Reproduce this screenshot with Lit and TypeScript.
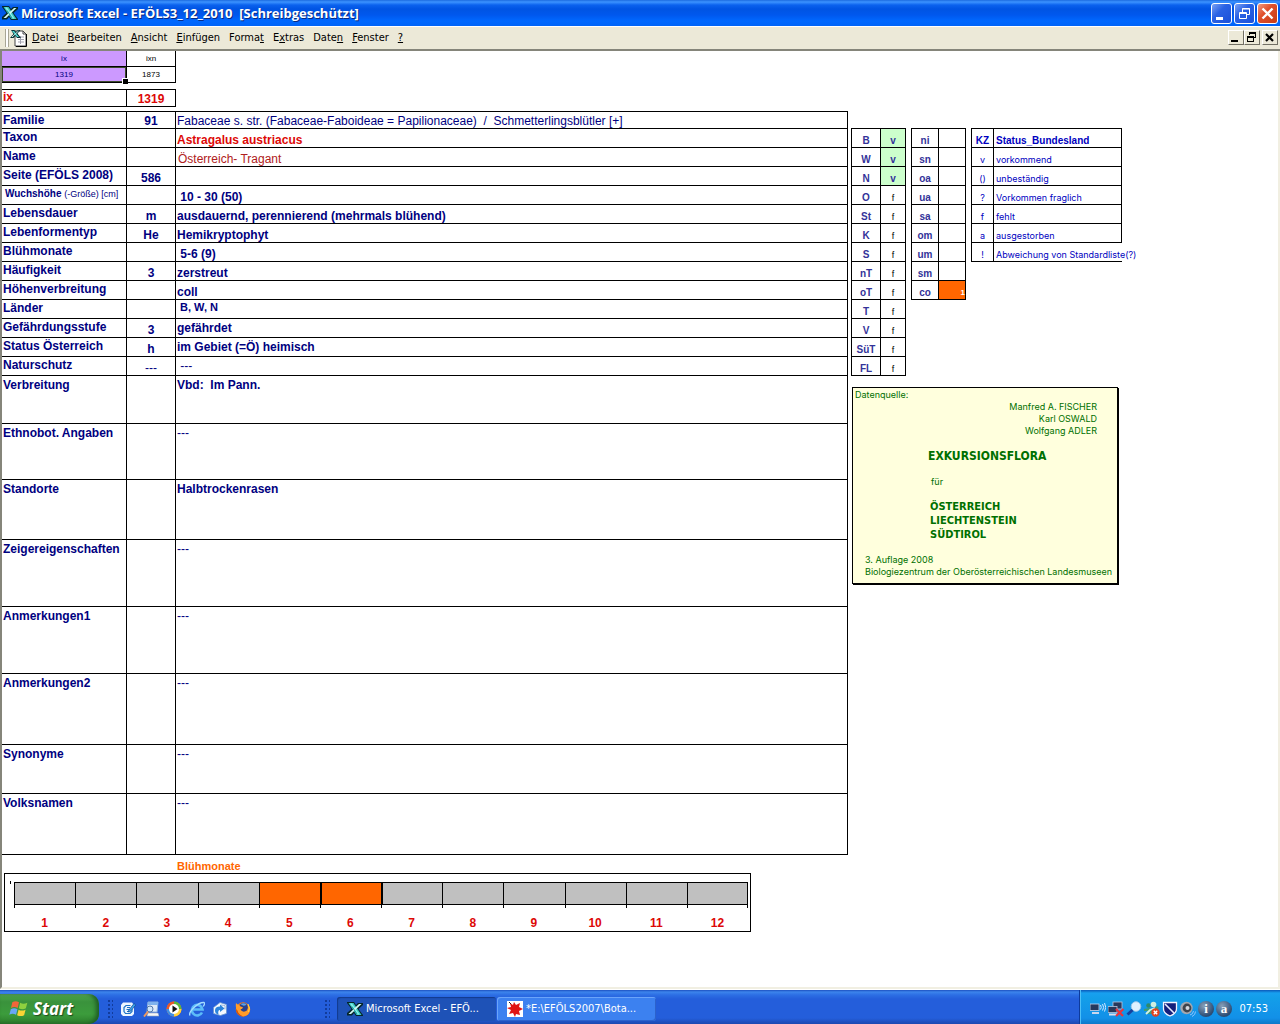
import { LitElement, html, css, svg, nothing } from "lit";
import { customElement } from "lit/decorators.js";
import { classMap } from "lit/directives/class-map.js";

type Align = "top" | "mid" | "low";

interface SheetRow {
  label: string;
  hint?: string;
  code?: string;
  value?: string;
  height: number;
  align?: Align;
  tone?: string;
}

const ROWS: SheetRow[] = [
  { label: "Familie", code: "91", value: "Fabaceae s. str. (Fabaceae-Faboideae = Papilionaceae)  /  Schmetterlingsblütler [+]", height: 17, tone: "plain" },
  { label: "Taxon", value: "Astragalus austriacus", height: 19, tone: "taxon" },
  { label: "Name", value: "Österreich- Tragant", height: 19, tone: "name" },
  { label: "Seite (EFÖLS 2008)", code: "586", height: 19 },
  { label: "Wuchshöhe", hint: "(-Größe) [cm]", value: "\u00a010 - 30 (50)", height: 19 },
  { label: "Lebensdauer", code: "m", value: "ausdauernd, perennierend (mehrmals blühend)", height: 19 },
  { label: "Lebenformentyp", code: "He", value: "Hemikryptophyt", height: 19 },
  { label: "Blühmonate", value: "\u00a05-6 (9)", height: 19 },
  { label: "Häufigkeit", code: "3", value: "zerstreut", height: 19 },
  { label: "Höhenverbreitung", value: "coll", height: 19 },
  { label: "Länder", value: "\u00a0B, W, N", height: 19, align: "top", tone: "small" },
  { label: "Gefährdungsstufe", code: "3", value: "gefährdet", height: 19, align: "mid" },
  { label: "Status Österreich", code: "h", value: "im Gebiet (=Ö) heimisch", height: 19, align: "mid" },
  { label: "Naturschutz", code: "---", value: "\u00a0---", height: 19, align: "mid", tone: "plain" },
  { label: "Verbreitung", value: "Vbd:  Im Pann.", height: 48 },
  { label: "Ethnobot. Angaben", value: "---", height: 56, tone: "plain" },
  { label: "Standorte", value: "Halbtrockenrasen", height: 60 },
  { label: "Zeigereigenschaften", value: "---", height: 67, tone: "plain" },
  { label: "Anmerkungen1", value: "---", height: 67, tone: "plain" },
  { label: "Anmerkungen2", value: "---", height: 71, tone: "plain" },
  { label: "Synonyme", value: "---", height: 49, tone: "plain" },
  { label: "Volksnamen", value: "---", height: 61, tone: "plain" },
];

const LANDS: [string, string][] = [
  ["B", "v"], ["W", "v"], ["N", "v"], ["O", "f"], ["St", "f"], ["K", "f"], ["S", "f"],
  ["nT", "f"], ["oT", "f"], ["T", "f"], ["V", "f"], ["SüT", "f"], ["FL", "f"],
];
const LEVELS = ["ni", "sn", "oa", "ua", "sa", "om", "um", "sm", "co"];
const KEYS: [string, string][] = [
  ["v", "vorkommend"],
  ["()", "unbeständig"],
  ["?", "Vorkommen fraglich"],
  ["f", "fehlt"],
  ["a", "ausgestorben"],
  ["!", "Abweichung von Standardliste(?)"],
];
const MENU: [string, string, string][] = [
  ["", "D", "atei"], ["", "B", "earbeiten"], ["", "A", "nsicht"], ["", "E", "infügen"],
  ["Forma", "t", ""], ["E", "x", "tras"], ["Date", "n", ""], ["", "F", "enster"], ["", "?", ""],
];

const excelIcon = html`<svg class="ico" viewBox="0 0 16 16" aria-hidden="true">
  <path d="M0 1h7l2 3 2-2h5v2l-4.500 4L16 14v1H9l-2-3-2 2.500H0V12l4.500-4L0 2z" fill="#06262a"/>
  <path d="M1.500 2h5L14.500 14h-5z" fill="#38c8c4"/>
  <path d="M3 2.500h2L12.500 13.500h-2z" fill="#8ceee6"/>
  <path d="M12 3h2.500L4 13H1.500z" fill="#d4f8f4"/>
  <path d="M5 5.500l5 7.500" stroke="#1c9c9c" stroke-width="1"/>
</svg>`;

const docIcon = html`<svg class="doc" viewBox="0 0 18 18" aria-hidden="true">
  <path d="M5 2h8l3 3v12H5z" fill="#fff" stroke="#444"/>
  <path d="M13 2v3h3" fill="none" stroke="#444"/>
  <path d="M16.500 5v12.500H6" fill="none" stroke="#000"/>
  <path d="M8 8h6M8 10.500h6M8 13h6M10.500 7v8" stroke="#a4a4b0"/>
  <path d="M1 1h3.500l1.500 2 2-2h2.500L7.500 4.500 11 9H7L5.500 7 3.500 9H0l3.500-4z" fill="#063034"/>
  <path d="M2 2h2l5 6H7z" fill="#4fd8d0"/>
  <path d="M8.500 2L2 8" stroke="#c8f4f0"/>
</svg>`;

const flagIcon = html`<svg class="flag" viewBox="0 0 18 18" aria-hidden="true">
  <path d="M3 3q3-2 6 0l-1.200 5q-3-1.800-6 0z" fill="#f0663a"/>
  <path d="M10 3.400q3 1.800 6.500 0l-1.300 5q-3 1.600-6.300 0z" fill="#8fd13f"/>
  <path d="M1.600 9.200q3-1.800 6 0l-1.300 5q-3-1.800-6 0z" fill="#6aa7f5"/>
  <path d="M8.600 9.600q3 1.600 6.300 0l-1.300 5q-3 1.600-6.300 0z" fill="#fbd435"/>
</svg>`;

const ico = (body: unknown) => html`<svg class="ico" viewBox="0 0 16 16" aria-hidden="true">${body}</svg>`;

const QUICK: [string, unknown][] = [
  ["Desktop anzeigen", svg`<path d="M3 1.500h9L14 4v9l-2 2H3l-2-2V4z" fill="#eef6ff"/><path d="M10.500 4.500H6L4 6.500v4l1.500 2H10l2-2V8M6.500 8.500H10M7 6.500h3M7 10.500h2" fill="none" stroke="#1c72c8" stroke-width="1.200"/><path d="M8.500 9.500l5.500-7 1.800 1.500-5.500 6.500-2 .5z" fill="#3aa0e8" stroke="#124a92" stroke-width=".7"/>`],
  ["Suche", svg`<path d="M5 1h10l-1 10H4z" fill="#dfeaf8" stroke="#8cb0e0"/><path d="M5 1h10v3H5z" fill="#7fb2ee"/><path d="M5 12h10l1 3H4z" fill="#f6f6f6" stroke="#9aa8c0" stroke-width=".6"/><circle cx="7" cy="8" r="3" fill="#cfe6fb" stroke="#5577aa"/><path d="M5 10.500L1 15.500" stroke="#f09a5c" stroke-width="2"/>`],
  ["Media Player", svg`<circle cx="8" cy="8" r="7.500" fill="#f5741f"/><path d="M8 .5A7.500 7.500 0 0 1 15.500 8H8z" fill="#58b83c"/><path d="M15.500 8A7.500 7.500 0 0 1 8 15.500V8z" fill="#ffd23c"/><path d="M.5 8A7.500 7.500 0 0 1 8 .5V8z" fill="#e8582a"/><path d="M.5 8A7.500 7.500 0 0 0 8 15.500V8z" fill="#3f8fe4"/><circle cx="8" cy="8" r="5" fill="#fff"/><path d="M6.500 4.500L11.500 8l-5 3.500z" fill="#111"/>`],
  ["Internet Explorer", svg`<path d="M13 11.500A5.300 5.300 0 1 1 13.500 8.500H4" fill="none" stroke="#5cbcf8" stroke-width="2.600"/><path d="M1 14.500C-1 11 9 1 15 1.500c1.500.8-.2 3-.8 4" fill="none" stroke="#a4dcff" stroke-width="1.400"/>`],
  ["Outlook Express", svg`<path d="M1.500 6.500L8 1.500l6.500 2v9l-6 2-7-2z" fill="#f4f8ff" stroke="#6a94cc" stroke-width=".8"/><path d="M9 4l4 .5v4" fill="none" stroke="#9ab8dc"/><path d="M3 9.500q0-4 5-4V3.500l4.500 4L8 11V9q-2.500 0-1.500 4.500Q3 13 3 9.500z" fill="#2c84dc"/>`],
  ["Firefox", svg`<circle cx="8" cy="8.500" r="7.200" fill="#f07818"/><circle cx="8.500" cy="6.500" r="4.500" fill="#27408c"/><path d="M5.500 3.200q3-2 6 0-1 1.500-3 1.500z" fill="#5aa0e8"/><path d="M1 2q1 1.800 3 1.800 1 2.200 4 2.400-.5 1.800-2.500 2 1 3 4.500 2.300 4-1 2.500-7.500Q17 9 13 13.500 8 17 3.500 13 0 9 1 2z" fill="#ff9c2a"/><path d="M1 8q0 6.500 7 7.500-5-2.500-5.500-6z" fill="#d4500c"/><path d="M13 3q2.500 4 .5 8" stroke="#ffd84a" fill="none"/>`],
];

const TRAY: [string, unknown][] = [
  ["Drahtlosnetzwerk", svg`<rect x="0" y="3" width="9" height="6.500" fill="#26385c" stroke="#c9d6ee" stroke-width=".8"/><path d="M2 12h7" stroke="#c9d6ee" stroke-width="2"/><path d="M10.500 4q1.500 2.500 0 4.500M12.500 3q2.300 3.500 0 6.500M14.500 2q2.500 4.500 0 8.500" fill="none" stroke="#d4e6ff"/>`],
  ["LAN getrennt", svg`<rect x="5" y="1" width="9" height="7" fill="#26385c" stroke="#b9c6de" stroke-width=".8"/><rect x="0" y="5.500" width="9" height="6" fill="#26385c" stroke="#b9c6de" stroke-width=".8"/><path d="M1 13.500h8" stroke="#d9dfee" stroke-width="2"/><path d="M8 8l7 7M15.500 8l-7.500 7" stroke="#e8343c" stroke-width="2.200"/>`],
  ["Lupe", svg`<circle cx="10" cy="5.500" r="4.800" fill="#dff1ff" stroke="#9cc8ea"/><path d="M6.500 9L1.500 13.500" stroke="#173f9c" stroke-width="3"/>`],
  ["Messenger", svg`<circle cx="4.500" cy="4.500" r="2.300" fill="#2f8a6a"/><circle cx="9.500" cy="3.500" r="2.800" fill="#cfeee0"/><path d="M0 8l5-1 3 2 5-4 2 2-4 3v3H3v-3H0z" fill="#3c9c74"/><path d="M2 13l4-4 5-2" fill="none" stroke="#d4f2e4" stroke-width="1.800"/><circle cx="11.500" cy="11.500" r="4.200" fill="#e0421f"/><path d="M9.800 9.800l3.400 3.400M13.200 9.800l-3.400 3.400" stroke="#fff" stroke-width="1.400"/>`],
  ["Virenschutz", svg`<path d="M1.500 1.500h13V8q0 4.500-6.500 7-6.500-2.500-6.500-7z" fill="#14207c" stroke="#f2f4ff" stroke-width="1.300"/><path d="M3 3l9 9" stroke="#e8ecff" stroke-width="1.600"/>`],
  ["Lautstärke", svg`<circle cx="6.500" cy="7" r="6.200" fill="#a4a8b0"/><circle cx="7" cy="7" r="4.400" fill="#3f444c"/><circle cx="7.500" cy="7" r="2" fill="#d4d8de"/><path d="M10 14q3-.5 3.500-4M12 15.500q3.500-1.500 3.500-5" fill="none" stroke="#8cc4ff"/>`],
];

@customElement("app-root")
export class AppRoot extends LitElement {
  static styles = css`
    :host { display: block; font-family: "Liberation Sans", Arial, sans-serif; font-size: 12px; color: #000080; }
    * { box-sizing: border-box; }
    button { font: inherit; color: inherit; margin: 0; padding: 0; border: 0; background: none; }
    .window { display: flex; flex-direction: column; min-height: 100vh; background: #fff; }
    .ico { width: 16px; height: 16px; flex: none; display: block; }

    .title { display: flex; align-items: center; height: 27px; padding: 0 2px; gap: 3px; border-bottom: 1px solid #fff;
      background: linear-gradient(#1c6be0 0, #3c93ff 2px, #0b62ee 5px, #0054e3 9px, #0058ee 15px, #0068ff 21px, #0064f8 26px); }
    .title h1 { flex: 1; margin: 0; font: bold 13px/20px "Open Sans", sans-serif; color: #fff; white-space: pre; text-shadow: 1px 1px #0a2a80; }
    .controls { display: flex; gap: 2px; }
    .ctl { width: 21px; height: 21px; border: 1px solid #fff; border-radius: 3px; background: linear-gradient(135deg, #7ba2f4, #2a62e4 40%, #1b50d8); }
    .ctl svg { display: block; width: 19px; height: 19px; }
    .ctl.close { background: linear-gradient(135deg, #f09a80, #e0502c 40%, #c83c14); }

    .menubar { display: flex; align-items: center; height: 24px; padding: 0 2px 1px 5px; background: #ece9d8;
      border-bottom: 2px solid #85857a; font: 11px/14px "DejaVu Sans Condensed", "DejaVu Sans", sans-serif; color: #000; }
    .grip { width: 4px; height: 18px; border-left: 1px solid #a8a696; border-right: 1px solid #a8a696; background: #fff; }
    .doc { width: 18px; height: 18px; margin: 0 4px 0 1px; }
    .menubar nav { display: flex; flex: 1; gap: 9px; }
    .menubar nav button { white-space: nowrap; }
    .mini { display: flex; }
    .mini button { width: 16px; height: 15px; border: 1px solid; border-color: #fff #716f64 #716f64 #fff; background: #ece9d8; }
    .mini button:last-child { margin-left: 2px; }
    .mini svg { display: block; width: 14px; height: 13px; }

    .sheet { flex: 1; border: solid; border-width: 0 2px 2px 2px; border-color: #fff #f1efe2 #f1efe2 #85857a; padding-bottom: 24px; }
    table { border-collapse: separate; border-spacing: 0; table-layout: fixed; }
    th, td { padding: 0; font-weight: bold; border: solid #000; border-width: 0 1px 1px 0; line-height: 14px; }

    .head { width: 174px; font-size: 8px; text-align: center; }
    .head th, .head td { height: 16px; font-weight: normal; color: #000; }
    .head .wide { width: 125px; }
    .head .key { background: #cc99ff; color: #000080; }
    .head .active { position: relative; }
    .cursor { position: absolute; inset: 0; border: 1px solid #3c4a2c; }
    .cursor::after { content: ""; position: absolute; right: -3px; bottom: -3px; width: 5px; height: 5px; background: #000; border: solid #fff; border-width: 1px 0 0 1px; }
    .index { width: 174px; margin: 6px 0 4px; border-top: 1px solid #000; color: #dd0806; }
    .index th, .index td { height: 17px; vertical-align: top; text-align: center; }
    .index th { width: 125px; text-align: left; padding-left: 1px; }
    .index td { vertical-align: bottom; }

    .content { display: flex; align-items: flex-start; gap: 3px; }
    .main { flex: 0 1 846px; }
    .record { width: 100%; border-top: 1px solid #000; }
    .c1 { width: 125px; } .c2 { width: 49px; }
    .record th { text-align: left; vertical-align: top; padding: 1px 0 0 1px; white-space: nowrap; }
    .record td { vertical-align: bottom; }
    .record .code { text-align: center; }
    .record .value { padding-left: 1px; white-space: pre-wrap; }
    .record .top { vertical-align: top; }
    .record .mid { vertical-align: middle; }
    .record .tall th, .record .tall td { vertical-align: top; padding-top: 2px; }
    .plain { font-weight: normal; }
    .record .name, .record .family { padding-left: 2px; }
    .taxon { color: #dd0806; }
    .name { color: #b02020; font-weight: normal; }
    .small { font-size: 11px; }
    .record th.hinted { font-size: 10px; padding-left: 3px; }
    .hint { font-size: 9px; font-weight: normal; }

    .side { flex: 1; margin-top: 17px; }
    .lists { display: flex; align-items: flex-start; gap: 5px; }
    .lists table { border: solid #000; border-width: 1px 0 0 1px; font-size: 10px; text-align: center; }
    .lists th, .lists td { height: 19px; vertical-align: bottom; line-height: 12px; }
    .lists th { color: #333399; }
    .lands { width: 55px; } .lands th { width: 29px; }
    .levels { width: 55px; } .levels th { width: 27px; }
    .lands td { color: #000; font-weight: normal; font-size: 9px; }
    .lands .yes { background: #ccffcc; color: #333399; font-weight: bold; font-size: 10px; }
    .levels .hit { background: #ff6600; color: #fff; font-size: 8px; text-align: right; }
    .keys { width: 151px; }
    .lists .keys th, .lists .keys td { color: #0000c0; white-space: nowrap; }
    .lists .keys td { font: 9px/12px Inter, "Liberation Sans", sans-serif; }
    .keys .k { width: 22px; }
    .keys .t { text-align: left; padding-left: 2px; }
    .keys tr:last-child .t { border-right: 0; }

    .source { display: flex; flex-direction: column; width: 266px; margin: 11px 0 0 1px; padding: 1px 12px 5px 2px; border: 1px solid #000;
      background: #ffffdd; box-shadow: 1px 1px #000; color: #007000; font: 9px/12px Inter, "Liberation Sans", sans-serif; }
    .source p { margin: 0; }
    .source .authors { text-align: right; padding-right: 8px; }
    .source .work { margin: 12px 0 0 73px; font: bold 12px/14px "DejaVu Sans Condensed", "DejaVu Sans", sans-serif; }
    .source .for { margin: 13px 0 0 76px; }
    .source .places { margin: 12px 0 0 75px; font: bold 11px/14px "DejaVu Sans Condensed", "DejaVu Sans", sans-serif; }
    .source .edition { margin: 12px 0 0 10px; white-space: nowrap; }

    .caption { margin: 0 0 0 175px; padding-top: 4px; font-size: 11px; line-height: 14px; color: #ff6600; }
    .chart { position: relative; display: grid; grid-template-columns: repeat(12, 1fr); width: calc(100% - 99px); margin: 0 0 0 2px; padding: 8px 2px 0 9px;
      list-style: none; border: 1px solid #000; }
    .chart::before { content: ""; position: absolute; left: 5px; top: 7px; width: 1px; height: 3px; background: #000; }
    .month { text-align: center; font-weight: bold; color: #dd0806; line-height: 16px; }
    .bar { height: 23px; border: solid #000; border-width: 1px 0 1px 1px; background: #c0c0c0; }
    .month:last-child .bar { border-right-width: 1px; }
    .bar.on { background: #ff6600; }
    .bar.edge { border-left-width: 2px; }
    .tick { height: 3px; margin-bottom: 7px; border-left: 1px solid #000; }
    .month:last-child .tick { border-right: 1px solid #000; }

    .taskbar { display: flex; align-items: stretch; height: 34px; margin-top: 1px; color: #fff;
      font: 11px/14px "DejaVu Sans Condensed", "DejaVu Sans", sans-serif;
      background: linear-gradient(#1c50c0 0, #3c84ec 2px, #2c6ee4 5px, #245edb 9px, #245edb 28px, #1c48b0 34px); }
    .start { display: flex; align-items: center; gap: 4px; width: 99px; margin-top: 4px; padding-left: 9px; border-radius: 0 10px 10px 0;
      font: italic bold 17px/24px "Open Sans", sans-serif; text-shadow: 1px 1px 1px #1c4a1c;
      background: linear-gradient(#6cb46c 0, #47a047 3px, #3a923c 8px, #3c9c3c 20px, #2c7c2c 30px); box-shadow: inset -3px 0 4px #1f5c24; }
    .flag { width: 20px; height: 20px; }
    .dots { width: 5px; margin: 10px 7px 6px 9px; background: radial-gradient(circle at 1px 1px, #123c9c 1px, transparent 1px) 0 0 / 4px 4px; }
    .quick { display: flex; align-items: center; gap: 7px; padding-top: 4px; width: 196px; }
    .tasks { display: flex; flex: 1; gap: 1px; padding: 7px 0 3px 0; }
    .task { display: flex; align-items: center; gap: 3px; width: 159px; padding-left: 10px; border-radius: 3px; white-space: nowrap;
      background: #3c81f0; box-shadow: inset 1px 1px #6aa4fa, inset -1px -1px #2c62cc; }
    .task.on { background: #1e52b7; box-shadow: inset 1px 1px 1px #123a8c; }
    .tray { display: flex; align-items: center; gap: 2px; width: 201px; padding: 4px 12px 0 10px; border-left: 1px solid #0d3a9c;
      background: linear-gradient(#0c59b9 0, #18a0f0 3px, #139ee9 8px, #1290e8 28px, #0f78c8 34px); box-shadow: inset 1px 0 #4cc0f8; }
    .tray time { flex: 1; text-align: right; white-space: nowrap; }
    .orb { width: 16px; height: 16px; border-radius: 8px; background: radial-gradient(circle at 6px 5px, #88a0b8, #2c4c74 70%);
      color: #fff; font: bold 13px/15px "Liberation Serif", serif; text-align: center; }
  `;

  private titleBar() {
    return html`<header class="title">
      ${excelIcon}
      <h1>Microsoft Excel - EFÖLS3_12_2010  [Schreibgeschützt]</h1>
      <div class="controls">
        <button class="ctl" aria-label="Minimieren"><svg viewBox="0 0 19 19"><path d="M4 13h7v3H4z" fill="#fff"/></svg></button>
        <button class="ctl" aria-label="Wiederherstellen"><svg viewBox="0 0 19 19"><path d="M7.500 8V4.500h7v6H12M7 5h8" fill="none" stroke="#fff"/><path d="M4.500 8.500h7v6h-7zM4 9.500h8" fill="none" stroke="#fff"/></svg></button>
        <button class="ctl close" aria-label="Schließen"><svg viewBox="0 0 19 19"><path d="M4.500 4.500l10 10M14.500 4.500l-10 10" stroke="#fff" stroke-width="2.400"/></svg></button>
      </div>
    </header>`;
  }

  private menuBar() {
    return html`<div class="menubar">
      <span class="grip"></span>${docIcon}
      <nav aria-label="Menü">${MENU.map(([a, k, b]) => html`<button>${a}<u>${k}</u>${b}</button>`)}</nav>
      <div class="mini">
        <button aria-label="Mappe minimieren"><svg viewBox="0 0 14 13"><path d="M2 9h7v2H2z"/></svg></button>
        <button aria-label="Mappe wiederherstellen"><svg viewBox="0 0 14 13"><path d="M4 1h7v6H9V6h1V3H5v1H4zM2 5h7v6H2zM3 7v3h5V7z" fill-rule="evenodd"/></svg></button>
        <button aria-label="Mappe schließen"><svg viewBox="0 0 14 13"><path d="M3 3l7 7M10 3l-7 7" stroke="#000" stroke-width="2.200"/></svg></button>
      </div>
    </div>`;
  }

  private record() {
    return html`<table class="record">
      <colgroup><col class="c1"><col class="c2"><col></colgroup>
      ${ROWS.map((r) => html`<tr class=${classMap({ tall: r.height > 19 })} style="height:${r.height}px">
        <th scope="row" class=${classMap({ hinted: !!r.hint })}>${r.label}${r.hint ? html` <span class="hint">${r.hint}</span>` : nothing}</th>
        <td class=${classMap({ code: true, plain: r.code === "---" })}>${r.code ?? ""}</td>
        <td class="value ${r.align ?? ""} ${r.tone ?? ""}">${r.value ?? ""}</td>
      </tr>`)}
    </table>`;
  }

  private chart() {
    const months = Array.from({ length: 12 }, (_, i) => i + 1);
    const on = [5, 6];
    return html`<ol class="chart" aria-label="Blühmonate">
      ${months.map((m) => html`<li class="month">
        <div class=${classMap({ bar: true, on: on.includes(m), edge: on.includes(m - 1) })}></div>
        <div class="tick"></div>${m}
      </li>`)}
    </ol>`;
  }

  private side() {
    return html`<aside class="side">
      <div class="lists">
        <table class="lands">
          ${LANDS.map(([k, v]) => html`<tr><th scope="row">${k}</th><td class=${classMap({ yes: v === "v" })}>${v}</td></tr>`)}
        </table>
        <table class="levels">
          ${LEVELS.map((k) => html`<tr><th scope="row">${k}</th><td class=${classMap({ hit: k === "co" })}>${k === "co" ? "1" : ""}</td></tr>`)}
        </table>
        <table class="keys">
          <tr><th class="k">KZ</th><th class="t">Status_Bundesland</th></tr>
          ${KEYS.map(([k, t]) => html`<tr><td class="k">${k}</td><td class="t">${t}</td></tr>`)}
        </table>
      </div>
      <section class="source">
        <p>Datenquelle:</p>
        <p class="authors">Manfred A. FISCHER<br>Karl OSWALD<br>Wolfgang ADLER</p>
        <p class="work">EXKURSIONSFLORA</p>
        <p class="for">für</p>
        <p class="places">ÖSTERREICH<br>LIECHTENSTEIN<br>SÜDTIROL</p>
        <p class="edition">3. Auflage 2008<br>Biologiezentrum der Oberösterreichischen Landesmuseen</p>
      </section>
    </aside>`;
  }

  private taskBar() {
    return html`<footer class="taskbar">
      <button class="start">${flagIcon}Start</button>
      <span class="dots"></span>
      <div class="quick">${QUICK.map(([n, body]) => html`<button aria-label=${n}>${ico(body)}</button>`)}</div>
      <span class="dots"></span>
      <div class="tasks">
        <button class="task on">${excelIcon}Microsoft Excel - EFÖ...</button>
        <button class="task">${ico(svg`<path d="M0 0h16v16H0z" fill="#fff"/><path d="M7 1l2 3 4-2-1 4 4 2-4 2 1 4-4-1-1 3-2-4-4 1 2-4-4-2 4-1-1-4 3 2z" fill="#e01414"/><path d="M2 1l2 2" stroke="#222"/>`)}*E:\\EFÖLS2007\\Bota...</button>
      </div>
      <div class="tray">
        ${TRAY.map(([n, body]) => html`<button aria-label=${n}>${ico(body)}</button>`)}
        <span class="orb">i</span><span class="orb">a</span>
        <time>07:53</time>
      </div>
    </footer>`;
  }

  render() {
    return html`<div class="window">
      ${this.titleBar()}${this.menuBar()}
      <main class="sheet">
        <table class="head">
          <tr><th class="wide key">ix</th><th>ixn</th></tr>
          <tr><td class="key active">1319<span class="cursor"></span></td><td>1873</td></tr>
        </table>
        <table class="index"><tr><th scope="row">ix</th><td>1319</td></tr></table>
        <div class="content">
          <div class="main">
            ${this.record()}
            <h2 class="caption">Blühmonate</h2>
            ${this.chart()}
          </div>
          ${this.side()}
        </div>
      </main>
      ${this.taskBar()}
    </div>`;
  }
}
